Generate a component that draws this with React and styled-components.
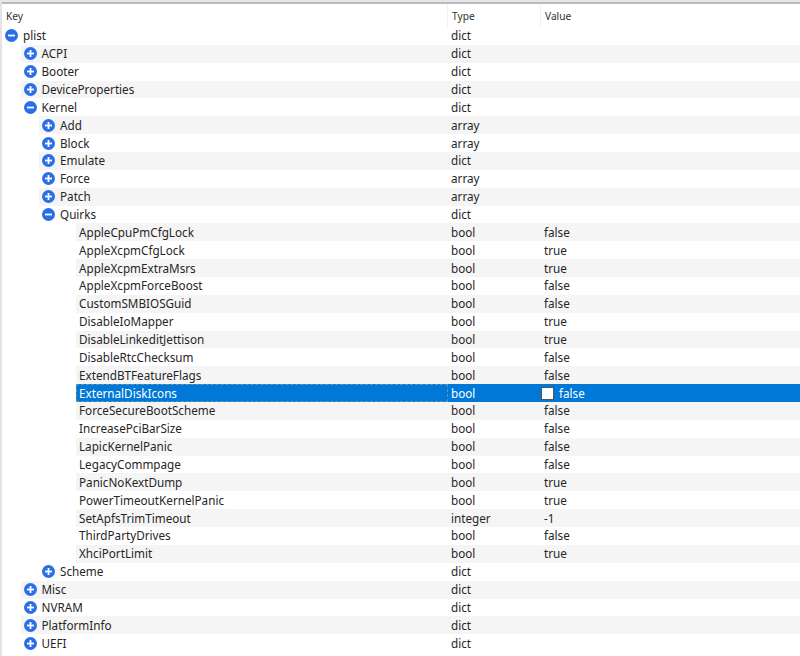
import React from "react";
import styled, { createGlobalStyle } from "styled-components";

const GlobalStyle = createGlobalStyle`
    html, body {
        margin: 0;
        padding: 0;
        background: #fff;
    }
    body {
        font-family: "Noto Sans", "Open Sans", sans-serif;
        font-size: 11.7px;
        color: #262626;
    }
`;

const Window = styled.div`
    width: 800px;
    height: 656px;
    overflow: hidden;
    background: #fff;
    border-left: 2px solid #e4e4e4;
    box-sizing: border-box;
`;

const TopEdge = styled.div`
    height: 2px;
    background: #e6e6e6;
    border-bottom: 2px solid #b9b9c0;
    margin-left: -2px;
`;

const Header = styled.div`
    display: grid;
    grid-template-columns: 446px 93px 1fr;
    height: 23px;
    padding-top: 1px;
    box-sizing: border-box;
    font-size: 10.2px;
    color: #333;
`;

const HeaderCell = styled.div`
    display: flex;
    align-items: center;
    padding-left: 4px;
    border-right: 1px solid #f0f0f0;
    &:last-child {
        border-right: 0;
    }
`;

const Row = styled.div`
    display: grid;
    grid-template-columns: ${(p) => 446 - p.$indent}px 93px 1fr;
    height: 17.86px;
    margin-left: ${(p) => p.$indent}px;
    align-items: center;
    line-height: 17px;
    background: ${(p) => (p.$selected ? "#0078d7" : p.$shaded ? "#f5f5f5" : "#fff")};
    color: ${(p) => (p.$selected ? "#fff" : "inherit")};
`;

const KeyCell = styled.div`
    display: flex;
    align-items: center;
    height: 100%;
    box-sizing: border-box;
    padding-left: 3px;
    gap: 5px;
    outline: ${(p) => (p.$selected ? "1px dashed rgba(190, 170, 140, 0.55)" : "none")};
    outline-offset: -1px;
`;

const TypeCell = styled.div`
    padding-left: 3px;
`;

const ValueCell = styled.div`
    display: flex;
    align-items: center;
    padding-left: 3px;
`;

const Check = styled.span`
    width: 11px;
    height: 11px;
    margin-left: -3px;
    margin-right: 5px;
    background: #fff;
    border: 1px solid #555;
`;

const ToggleSvg = styled.svg`
    width: 13px;
    height: 13px;
    flex: none;
`;

const Toggle = ({ open }) => (
    <ToggleSvg viewBox="0 0 13 13">
        <circle cx="6.5" cy="6.5" r="6.5" fill="#2a6fe8" />
        <rect x="3" y="5.6" width="7" height="1.8" fill="#fff" />
        {!open && <rect x="5.6" y="3" width="1.8" height="7" fill="#fff" />}
    </ToggleSvg>
);

const leaf = (key, type, value) => ({ key, type, value });
const node = (key, type, children, open) => ({ key, type, children, open });

const quirks = [
    leaf("AppleCpuPmCfgLock", "bool", "false"),
    leaf("AppleXcpmCfgLock", "bool", "true"),
    leaf("AppleXcpmExtraMsrs", "bool", "true"),
    leaf("AppleXcpmForceBoost", "bool", "false"),
    leaf("CustomSMBIOSGuid", "bool", "false"),
    leaf("DisableIoMapper", "bool", "true"),
    leaf("DisableLinkeditJettison", "bool", "true"),
    leaf("DisableRtcChecksum", "bool", "false"),
    leaf("ExtendBTFeatureFlags", "bool", "false"),
    { ...leaf("ExternalDiskIcons", "bool", "false"), selected: true },
    leaf("ForceSecureBootScheme", "bool", "false"),
    leaf("IncreasePciBarSize", "bool", "false"),
    leaf("LapicKernelPanic", "bool", "false"),
    leaf("LegacyCommpage", "bool", "false"),
    leaf("PanicNoKextDump", "bool", "true"),
    leaf("PowerTimeoutKernelPanic", "bool", "true"),
    leaf("SetApfsTrimTimeout", "integer", "-1"),
    leaf("ThirdPartyDrives", "bool", "false"),
    leaf("XhciPortLimit", "bool", "true"),
];

const tree = node("plist", "dict", [
    node("ACPI", "dict"),
    node("Booter", "dict"),
    node("DeviceProperties", "dict"),
    node("Kernel", "dict", [
        node("Add", "array"),
        node("Block", "array"),
        node("Emulate", "dict"),
        node("Force", "array"),
        node("Patch", "array"),
        node("Quirks", "dict", quirks, true),
        node("Scheme", "dict"),
    ], true),
    node("Misc", "dict"),
    node("NVRAM", "dict"),
    node("PlatformInfo", "dict"),
    node("UEFI", "dict"),
], true);

// walk the tree into a flat list, every second row is shaded
const flatten = (item, depth = 0, out = []) => {
    const isLeaf = item.value !== undefined;
    out.push({ ...item, isLeaf, indent: isLeaf ? 74 : depth * 18.5, shaded: out.length % 2 === 1 });
    if (item.open) {
        item.children.forEach((child) => flatten(child, depth + 1, out));
    }
    return out;
};

const App = () => {
    const rows = flatten(tree);

    return (
        <>
            <GlobalStyle />
            <Window>
                <TopEdge />
                <Header>
                    <HeaderCell>Key</HeaderCell>
                    <HeaderCell>Type</HeaderCell>
                    <HeaderCell>Value</HeaderCell>
                </Header>
                {rows.map((row) => (
                    <Row key={row.key} $indent={row.indent} $shaded={row.shaded} $selected={row.selected}>
                        <KeyCell $selected={row.selected}>
                            {!row.isLeaf && <Toggle open={row.open} />}
                            {row.key}
                        </KeyCell>
                        <TypeCell>{row.type}</TypeCell>
                        <ValueCell>
                            {row.selected && <Check />}
                            {row.value}
                        </ValueCell>
                    </Row>
                ))}
            </Window>
        </>
    );
};

export default App;
